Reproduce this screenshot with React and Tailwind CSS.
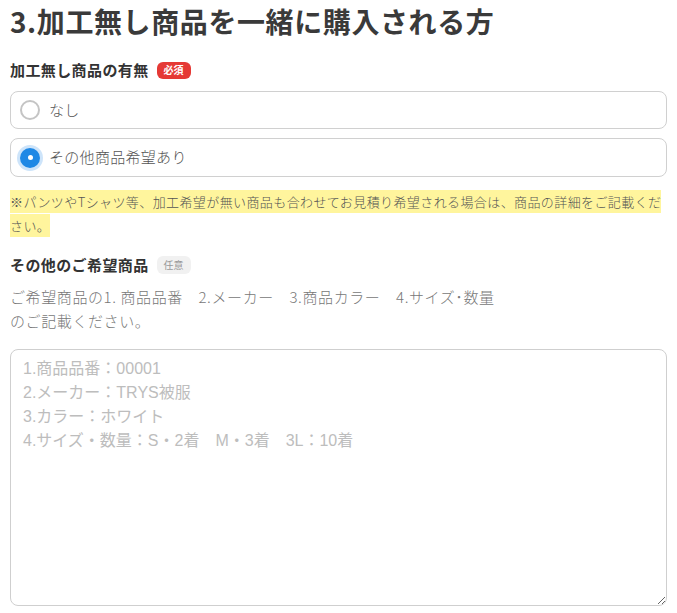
export default function App() {
  const font = { fontFamily: '"Noto Sans CJK JP", "Noto Sans", sans-serif' };

  return (
    <div
      className="w-[677px] bg-white px-[10px] text-[#444]"
      style={font}
    >
      <h1 className="text-[28px] font-bold leading-[42px] tracking-[0.6px] text-[#3a3a3a]">
        3.加工無し商品を一緒に購入される方
      </h1>

      {/* 加工無し商品の有無 */}
      <div className="mt-4 flex items-center gap-2 h-6">
        <span className="text-[15px] font-bold tracking-[0.4px] text-[#333]">加工無し商品の有無</span>
        <span className="flex h-[17px] items-center rounded-[6px] bg-[#e53935] px-[7px] text-[10px] font-bold leading-none text-white">
          必須
        </span>
      </div>

      <div className="mt-[9px] flex flex-col gap-[9px]">
        <label className="flex h-[38px] items-center gap-[9px] rounded-[8px] border border-[#d0d0d0] pl-[9px]">
          <span className="h-[20px] w-[20px] rounded-full border-2 border-[#c4c4c4] bg-white" />
          <span className="text-[15px] font-light tracking-[0.3px] text-[#555]">なし</span>
        </label>
        <label className="flex h-[39px] items-center gap-[9px] rounded-[8px] border border-[#d0d0d0] pl-[9px]">
          <span className="flex h-[20px] w-[20px] items-center justify-center rounded-full bg-[#1e88e5] ring-[3px] ring-[#cde4fa]">
            <span className="h-[5px] w-[5px] rounded-full bg-white" />
          </span>
          <span className="text-[15px] font-light tracking-[0.3px] text-[#555]">その他商品希望あり</span>
        </label>
      </div>

      <p className="mt-[13px] text-[13px] font-light leading-[24px] tracking-[0.4px] text-[#555]">
        <span className="bg-[#fff59d] py-[2px]">
          ※パンツやTシャツ等、加工希望が無い商品も合わせてお見積り希望される場合は、商品の詳細をご記載ください。
        </span>
      </p>

      {/* その他のご希望商品 */}
      <div className="mt-[15px] flex h-6 items-center gap-2">
        <span className="text-[15px] font-bold tracking-[0.4px] text-[#333]">その他のご希望商品</span>
        <span className="flex h-[18px] items-center rounded-[6px] bg-[#f1f1f1] px-[7px] text-[10px] leading-none text-[#999]">
          任意
        </span>
      </div>
      <p className="mt-2 text-[15px] font-light leading-[24px] tracking-[0.6px] text-[#777]">
        ご希望商品の1. 商品品番　2.メーカー　3.商品カラー　4.サイズ･数量
        <br />
        のご記載ください。
      </p>

      <textarea
        className="mt-4 block h-[257px] w-full resize-y rounded-[8px] border border-[#cfcfcf] px-3 py-[7px] text-[16px] leading-[24px] text-[#444] placeholder:text-[#bdbdbd] outline-none"
        style={{ fontFamily: '"Liberation Sans", "Noto Sans CJK JP", sans-serif' }}
        placeholder={
          "1.商品品番：00001\n2.メーカー：TRYS被服\n3.カラー：ホワイト\n4.サイズ・数量：S・2着　M・3着　3L：10着"
        }
      />
    </div>
  );
}
